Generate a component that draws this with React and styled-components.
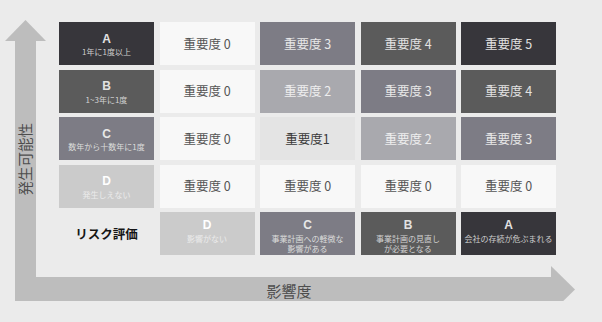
import React from 'react';
import styled, { createGlobalStyle } from 'styled-components';

const GlobalStyle = createGlobalStyle`
  html, body { margin: 0; padding: 0; background: #ebebeb; }
  body { font-family: "Noto Sans CJK JP", "Noto Sans", sans-serif; }
`;

const AXIS = '#bdbdbd';

const tones = {
  a: { bg: '#37363b', fg: '#e2e2e2', sub: '#cdcdcd' },
  b: { bg: '#5b5b5b', fg: '#e2e2e2', sub: '#d2d2d2' },
  c: { bg: '#7d7c85', fg: '#e8e8e8', sub: '#dcdcdc' },
  l: { bg: '#a9a9ae', fg: '#eeeeee', sub: '#eeeeee' },
  d: { bg: '#cbcbcb', fg: '#ffffff', sub: '#ececec' },
  w: { bg: '#f8f8f8', fg: '#555555', sub: '#555555' },
  g: { bg: '#e4e4e4', fg: '#3a3a3a', sub: '#3a3a3a' },
};

const levelTone = ['w', 'g', 'l', 'c', 'b', 'a'];

const Figure = styled.div`
  display: flex;
  flex-direction: column;
  padding: 20px 0 0 5px;
  width: 602px;
  box-sizing: border-box;
`;

const Top = styled.div`
  display: flex;
  align-items: stretch;
`;

const YAxis = styled.div`
  display: flex;
  flex-direction: column;
  width: 41px;
  flex: none;
`;

const ArrowHead = styled.svg`
  display: block;
  flex: none;
`;

const YShaft = styled.div`
  flex: 1;
  width: 21px;
  margin-left: 10px;
  background: ${AXIS};
  display: flex;
  align-items: center;
  justify-content: center;
`;

const YLabel = styled.span`
  writing-mode: vertical-rl;
  text-orientation: sideways;
  transform: rotate(180deg);
  font-size: 14.5px;
  line-height: 1;
  color: #4d4d4d;
  white-space: nowrap;
`;

const Matrix = styled.div`
  display: grid;
  grid-template-columns: repeat(5, 95px);
  grid-auto-rows: 43px;
  column-gap: 5.5px;
  row-gap: 4.5px;
  margin: 2px 0 22px 13px;
`;

const Cell = styled.div`
  background: ${(p) => tones[p.$tone].bg};
  color: ${(p) => tones[p.$tone].fg};
  display: flex;
  flex-direction: column;
  align-items: center;
  justify-content: ${(p) => (p.$top ? 'flex-start' : 'center')};
  padding-top: ${(p) => (p.$top ? '7px' : '3px')};
  box-sizing: border-box;
  text-align: center;
`;

const Letter = styled.div`
  font-family: "Liberation Sans", "Noto Sans", sans-serif;
  font-weight: 700;
  font-size: 12px;
  line-height: 13.5px;
`;

const Sub = styled.div`
  font-size: 8px;
  line-height: 10px;
  margin-top: 1px;
  color: ${(p) => tones[p.$tone].sub};
  white-space: nowrap;
`;

const Severity = styled.div`
  font-size: 12.5px;
  line-height: 16px;
  margin-top: -3px;
  white-space: nowrap;
`;

const RiskLabel = styled.div`
  display: flex;
  align-items: center;
  justify-content: center;
  font-weight: 700;
  font-size: 12.5px;
  color: #151515;
`;

const XAxis = styled.div`
  display: flex;
  align-items: center;
  height: 24px;
  margin-left: 10px;
`;

const XShaft = styled.div`
  width: 536px;
  height: 24px;
  background: ${AXIS};
  display: flex;
  align-items: center;
  justify-content: center;
  padding: 3px 0 0 12px;
  box-sizing: border-box;
`;

const XLabel = styled.span`
  font-size: 15px;
  line-height: 1;
  color: #4d4d4d;
`;

const RightHead = styled.svg`
  display: block;
  flex: none;
  margin: -11.5px 0;
`;

const rows = [
  { tone: 'a', letter: 'A', sub: ['1年に1度以上'], levels: [0, 3, 4, 5] },
  { tone: 'b', letter: 'B', sub: ['1~3年に1度'], levels: [0, 2, 3, 4] },
  { tone: 'c', letter: 'C', sub: ['数年から十数年に1度'], levels: [0, 1, 2, 3] },
  { tone: 'd', letter: 'D', sub: ['発生しえない'], levels: [0, 0, 0, 0] },
];

const impacts = [
  { tone: 'd', letter: 'D', sub: ['影響がない'] },
  { tone: 'c', letter: 'C', sub: ['事業計画への軽微な', '影響がある'] },
  { tone: 'b', letter: 'B', sub: ['事業計画の見直し', 'が必要となる'] },
  { tone: 'a', letter: 'A', sub: ['会社の存続が危ぶまれる'] },
];

function LabelCell({ tone, letter, sub, top }) {
  return (
    <Cell $tone={tone} $top={top}>
      <Letter>{letter}</Letter>
      <Sub $tone={tone}>
        {sub.map((s, i) => (
          <React.Fragment key={s}>
            {i > 0 && <br />}
            {s}
          </React.Fragment>
        ))}
      </Sub>
    </Cell>
  );
}

export default function App() {
  return (
    <>
      <GlobalStyle />
      <Figure>
        <Top>
          <YAxis>
            <ArrowHead width="41" height="21" viewBox="0 0 41 21">
              <polygon points="20.5,0 41,21 0,21" fill={AXIS} />
            </ArrowHead>
            <YShaft>
              <YLabel>発生可能性</YLabel>
            </YShaft>
          </YAxis>
          <Matrix>
            {rows.map((r) => (
              <React.Fragment key={r.letter}>
                <LabelCell tone={r.tone} letter={r.letter} sub={r.sub} />
                {r.levels.map((lv, i) => (
                  <Cell key={i} $tone={levelTone[lv]}>
                    <Severity>{lv === 1 ? '重要度1' : `重要度 ${lv}`}</Severity>
                  </Cell>
                ))}
              </React.Fragment>
            ))}
            <RiskLabel>リスク評価</RiskLabel>
            {impacts.map((c) => (
              <LabelCell key={c.letter} tone={c.tone} letter={c.letter} sub={c.sub} top />
            ))}
          </Matrix>
        </Top>
        <XAxis>
          <XShaft>
            <XLabel>影響度</XLabel>
          </XShaft>
          <RightHead width="24" height="47" viewBox="0 0 24 47">
            <polygon points="0,0 24,23.5 0,47" fill={AXIS} />
          </RightHead>
        </XAxis>
      </Figure>
    </>
  );
}
